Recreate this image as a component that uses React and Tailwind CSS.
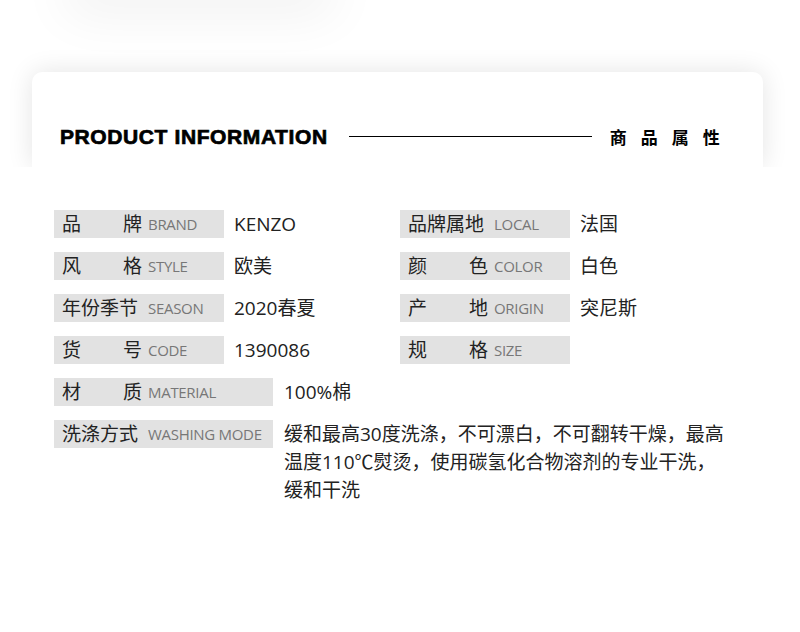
const specs = [
    [
        { zh: ["品", "牌"], en: "BRAND", value: "KENZO" },
        { zh: ["品牌属地"], en: "LOCAL", value: "法国" },
    ],
    [
        { zh: ["风", "格"], en: "STYLE", value: "欧美" },
        { zh: ["颜", "色"], en: "COLOR", value: "白色" },
    ],
    [
        { zh: ["年份季节"], en: "SEASON", value: "2020春夏" },
        { zh: ["产", "地"], en: "ORIGIN", value: "突尼斯" },
    ],
    [
        { zh: ["货", "号"], en: "CODE", value: "1390086" },
        { zh: ["规", "格"], en: "SIZE", value: "" },
    ],
];

const washing = [
    "缓和最高30度洗涤，不可漂白，不可翻转干燥，最高",
    "温度110℃熨烫，使用碳氢化合物溶剂的专业干洗，",
    "缓和干洗",
];

function Label({ zh, en, wide }) {
    return (
        <div
            className={`${wide ? "w-[219px]" : "w-[170px]"} h-[28px] bg-[#e2e2e2] flex items-center pl-[8px] shrink-0`}
        >
            <div className="w-[80px] flex justify-between text-[19px] text-[#222] leading-none">
                {zh.map((c) => (
                    <span key={c}>{c}</span>
                ))}
            </div>
            <span className="ml-[6px] text-[15px] text-[#777] leading-none tracking-[-0.3px]">{en}</span>
        </div>
    );
}

function Spec({ zh, en, value }) {
    return (
        <div className="flex items-center">
            <Label zh={zh} en={en} />
            <span className="ml-[10px] text-[19px] text-[#222] leading-none">{value}</span>
        </div>
    );
}

export default function App() {
    return (
        <div
            className="w-[800px] h-[632px] bg-white overflow-hidden"
            style={{ fontFamily: '"Open Sans", "Noto Sans CJK SC", sans-serif' }}
        >
            <div className="ml-[60px] w-[280px] h-[50px] -mt-[50px] shadow-[0_18px_50px_rgba(0,0,0,0.05)] rounded-full" />

            <div className="ml-[32px] mt-[72px] w-[731px] h-[95px] rounded-t-[10px] bg-white shadow-[0_0_26px_rgba(0,0,0,0.11)] px-[28px] pt-[54px]">
                <div className="flex items-center">
                    <h1
                        className="text-[21px] font-bold text-black tracking-[0.6px] leading-none [-webkit-text-stroke:0.7px_black]"
                        style={{ fontFamily: '"Liberation Sans", Arial, sans-serif' }}
                    >
                        PRODUCT INFORMATION
                    </h1>
                    <div className="ml-[21px] w-[243px] h-px bg-black" />
                    <div
                        className="ml-[18px] text-[17px] font-bold text-black tracking-[14px] leading-none"
                        style={{ fontFamily: '"Noto Sans CJK SC", sans-serif' }}
                    >
                        商品属性
                    </div>
                </div>
            </div>

            <div className="relative bg-white pt-[43px] pl-[54px] h-[465px]">
                <div className="space-y-[14px]">
                    {specs.map((row, i) => (
                        <div key={i} className="grid grid-cols-[346px_1fr]">
                            <Spec {...row[0]} />
                            <Spec {...row[1]} />
                        </div>
                    ))}
                    <div className="flex items-center">
                        <Label zh={["材", "质"]} en="MATERIAL" wide />
                        <span className="ml-[11px] text-[19px] text-[#222] leading-none">100%棉</span>
                    </div>
                    <div className="flex items-start">
                        <Label zh={["洗涤方式"]} en="WASHING MODE" wide />
                        <p className="ml-[11px] text-[19px] text-[#222] leading-[28px] whitespace-nowrap">
                            {washing.map((line) => (
                                <span key={line} className="block">{line}</span>
                            ))}
                        </p>
                    </div>
                </div>
            </div>
        </div>
    );
}
